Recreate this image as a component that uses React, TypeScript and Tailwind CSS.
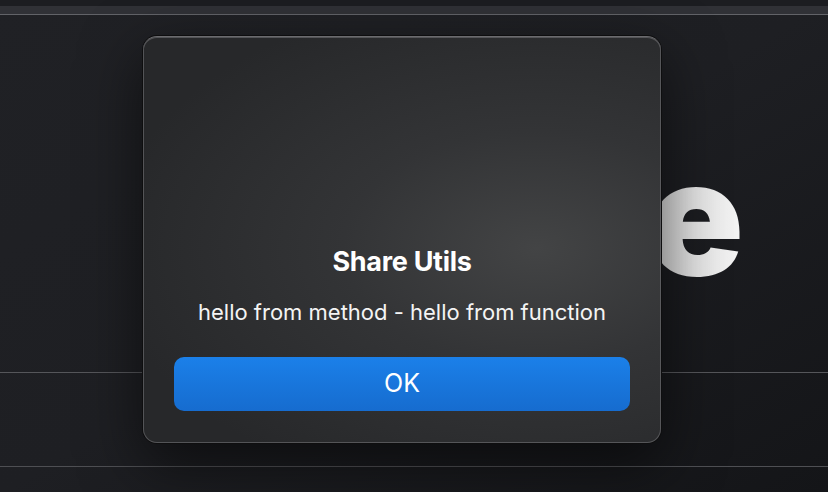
import React from "react";

const App: React.FC = () => {
  return (
    <div
      className="relative h-[492px] w-[828px] overflow-hidden bg-[#1e1f23] text-white"
      style={{ fontFamily: "Inter, 'Noto Sans', 'Liberation Sans', sans-serif" }}
    >
      {/* page behind the alert */}
      <div className="flex h-full flex-col bg-gradient-to-br from-[#202125] via-[#1e1f23] to-[#141518]">
        <div className="h-[6px] bg-[#1c1d21]" />
        <div className="h-[9px] border-b border-[#626368] bg-[#303136]" />
        <div className="flex h-[357px] items-start justify-end pr-[88px] pt-[122px]">
          <span className="bg-gradient-to-r from-[#cfcfcf] to-[#f4f4f4] bg-clip-text text-[160px] font-black leading-none tracking-tight text-transparent">
            e
          </span>
        </div>
        <div className="h-[94px] border-t border-[#55565a]" />
        <div className="flex-1 border-t border-[#4e4f53]" />
      </div>

      {/* modal overlay */}
      <div className="absolute inset-0 flex items-start justify-start pl-[142px] pt-[35px]">
        <div className="w-[520px] rounded-[15px] bg-[#0e0e0f] p-px shadow-[0_20px_60px_rgba(0,0,0,0.55)]">
          <div
            className="flex h-[407px] flex-col items-center rounded-[14px] border-t border-[#6b6b6e] px-[31px] pb-[32px] pt-[209px] shadow-[inset_0_0_0_1px_rgba(120,120,124,0.55)]"
            style={{
              background:
                "radial-gradient(ellipse 430px 260px at 76% 52%, #434445 0%, #333436 45%, #27282a 100%)",
            }}
          >
            <h2 className="text-[27px] font-bold leading-[32px] tracking-[-0.3px]">Share Utils</h2>
            <p className="mt-[20px] text-[22px] leading-[28px] text-[#f4f4f4]">
              hello from method - hello from function
            </p>
            <button className="mt-[31px] h-[55px] w-full rounded-[10px] bg-gradient-to-b from-[#1b80e9] to-[#166ccf] text-[25px] font-normal text-white">
              OK
            </button>
          </div>
        </div>
      </div>
    </div>
  );
};

export default App;
